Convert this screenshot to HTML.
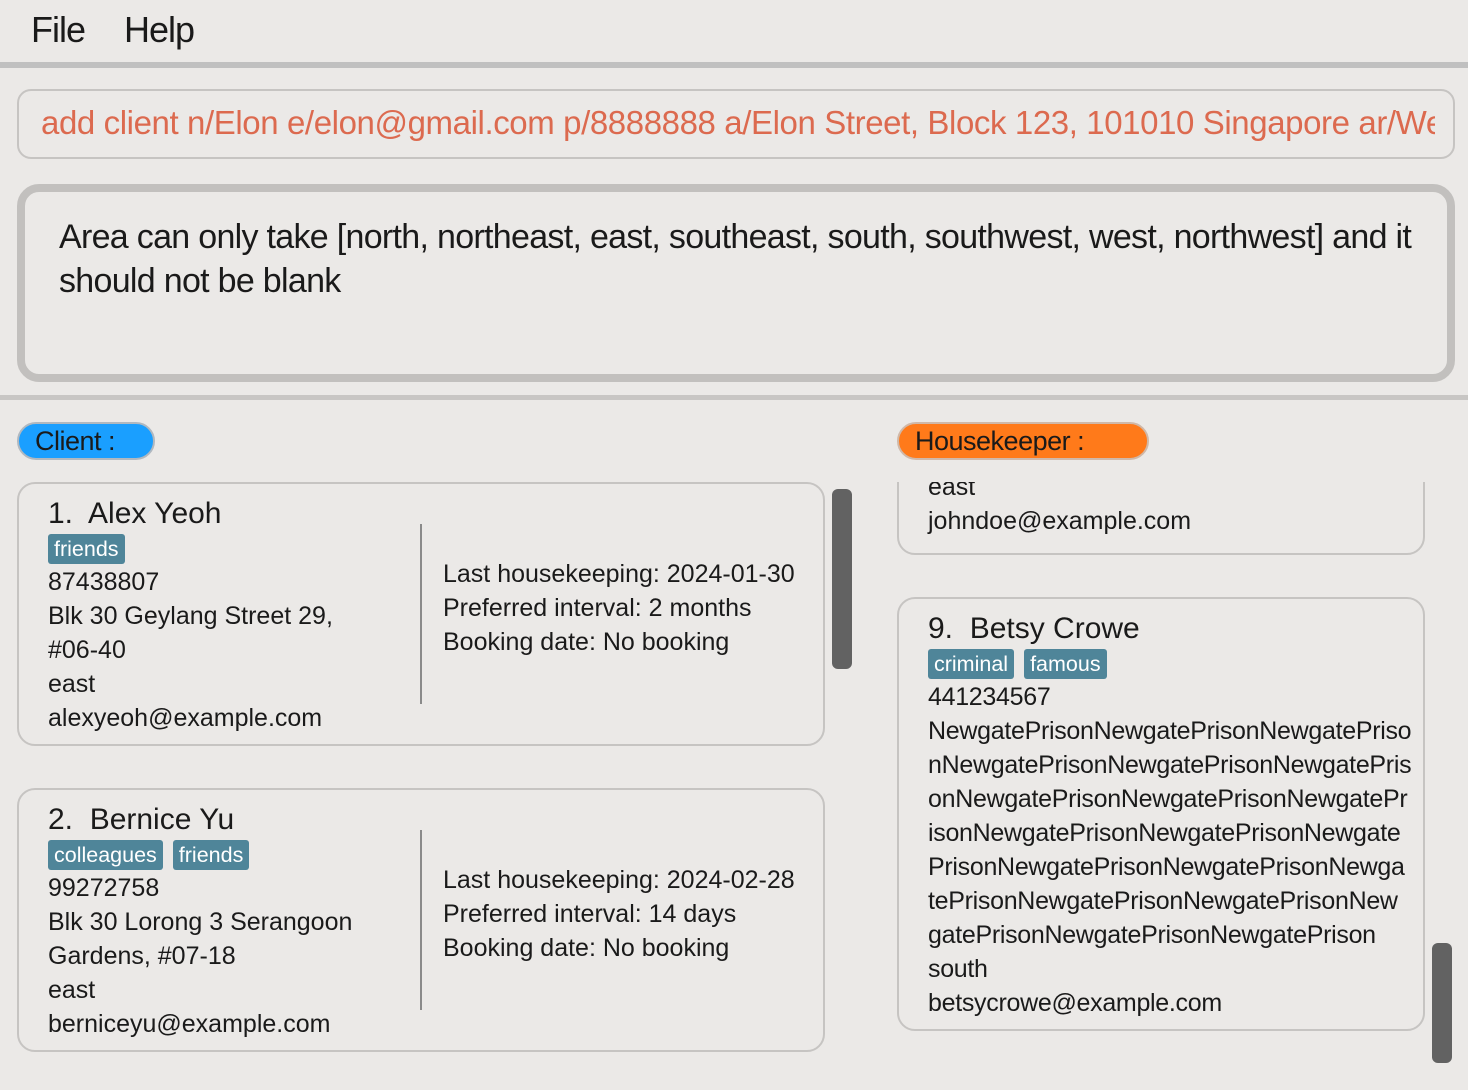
<!DOCTYPE html>
<html><head><meta charset="utf-8"><style>
*{margin:0;padding:0;box-sizing:border-box}
body{width:1468px;height:1090px;background:#ebe9e7;font-family:"Liberation Sans",sans-serif;color:#1a1a1a;position:relative;overflow:hidden}
.a{position:absolute;white-space:nowrap}
.card{position:absolute;border:2px solid #c6c4c2;border-radius:18px}
.t{font-size:25px;line-height:34px;letter-spacing:0}
.tag{display:inline-block;background:#4f8599;color:#fff;font-size:21.5px;line-height:30px;padding:0 6px;border-radius:3px;margin-right:10px;letter-spacing:0}
.nm{font-size:30px;line-height:36px;letter-spacing:0}
</style></head><body>
<div class="a" style="left:31px;top:9px;font-size:36px;letter-spacing:-1px">File</div>
<div class="a" style="left:124px;top:9px;font-size:36px;letter-spacing:-1px">Help</div>
<div class="a" style="left:0;top:62px;width:1468px;height:6px;background:#c0c0c0"></div>
<div class="a" style="left:17px;top:89px;width:1438px;height:70px;border:2px solid #c6c4c2;border-radius:14px"></div>
<div class="a" style="left:39px;top:91px;width:1396px;height:66px;overflow:hidden">
<div class="a" style="left:2px;top:13px;font-size:33px;color:#dc6a4f;letter-spacing:-0.4px">add client n/Elon e/elon@gmail.com p/8888888 a/Elon Street, Block 123, 101010 Singapore ar/West</div></div>
<div class="a" style="left:17px;top:184px;width:1438px;height:198px;border:8px solid #c2c0be;border-radius:22px"></div>
<div class="a" style="left:59px;top:215px;font-size:34px;line-height:44px;letter-spacing:-0.7px">Area can only take [north, northeast, east, southeast, south, southwest, west, northwest] and it<br>should not be blank</div>
<div class="a" style="left:0;top:395px;width:1468px;height:5px;background:#c8c6c4"></div>
<div class="a" style="left:17px;top:422px;width:138px;height:38px;background:#1a9fff;border:2px solid #b0b8c0;border-radius:19px;font-size:27px;line-height:34px;padding-left:16px;letter-spacing:-0.5px">Client :</div>
<div class="a" style="left:897px;top:422px;width:252px;height:38px;background:#ff7a1a;border:2px solid #d0b8a8;border-radius:19px;font-size:27px;line-height:34px;padding-left:16px;letter-spacing:-0.5px">Housekeeper :</div>

<div class="card" style="left:17px;top:482px;width:808px;height:264px"></div>
<div class="a nm" style="left:48px;top:496px">1.&nbsp; Alex Yeoh</div>
<div class="a" style="left:48px;top:534px"><span class="tag">friends</span></div>
<div class="a t" style="left:48px;top:565px">87438807<br>Blk 30 Geylang Street 29,<br>#06-40<br>east<br>alexyeoh@example.com</div>
<div class="a" style="left:420px;top:524px;width:2px;height:180px;background:#8a8a8a"></div>
<div class="a t" style="left:443px;top:557px">Last housekeeping: 2024-01-30<br>Preferred interval: 2 months<br>Booking date: No booking</div>

<div class="card" style="left:17px;top:788px;width:808px;height:264px"></div>
<div class="a nm" style="left:48px;top:802px">2.&nbsp; Bernice Yu</div>
<div class="a" style="left:48px;top:840px"><span class="tag">colleagues</span><span class="tag">friends</span></div>
<div class="a t" style="left:48px;top:871px">99272758<br>Blk 30 Lorong 3 Serangoon<br>Gardens, #07-18<br>east<br>berniceyu@example.com</div>
<div class="a" style="left:420px;top:830px;width:2px;height:180px;background:#8a8a8a"></div>
<div class="a t" style="left:443px;top:863px">Last housekeeping: 2024-02-28<br>Preferred interval: 14 days<br>Booking date: No booking</div>

<div class="a" style="left:832px;top:489px;width:20px;height:180px;background:#626262;border-radius:6px"></div>

<div class="a" style="left:880px;top:482px;width:560px;height:80px;overflow:hidden">
<div class="card" style="left:17px;top:-40px;width:528px;height:113px"></div>
<div class="a t" style="left:48px;top:-12px">east<br>johndoe@example.com</div></div>

<div class="card" style="left:897px;top:597px;width:528px;height:434px"></div>
<div class="a nm" style="left:928px;top:611px">9.&nbsp; Betsy Crowe</div>
<div class="a" style="left:928px;top:649px"><span class="tag">criminal</span><span class="tag">famous</span></div>
<div class="a t" style="left:928px;top:680px;letter-spacing:-0.3px">441234567<br>NewgatePrisonNewgatePrisonNewgatePriso<br>nNewgatePrisonNewgatePrisonNewgatePris<br>onNewgatePrisonNewgatePrisonNewgatePr<br>isonNewgatePrisonNewgatePrisonNewgate<br>PrisonNewgatePrisonNewgatePrisonNewga<br>tePrisonNewgatePrisonNewgatePrisonNew<br>gatePrisonNewgatePrisonNewgatePrison<br>south<br>betsycrowe@example.com</div>
<div class="a" style="left:1432px;top:943px;width:20px;height:120px;background:#626262;border-radius:6px"></div>
</body></html>
